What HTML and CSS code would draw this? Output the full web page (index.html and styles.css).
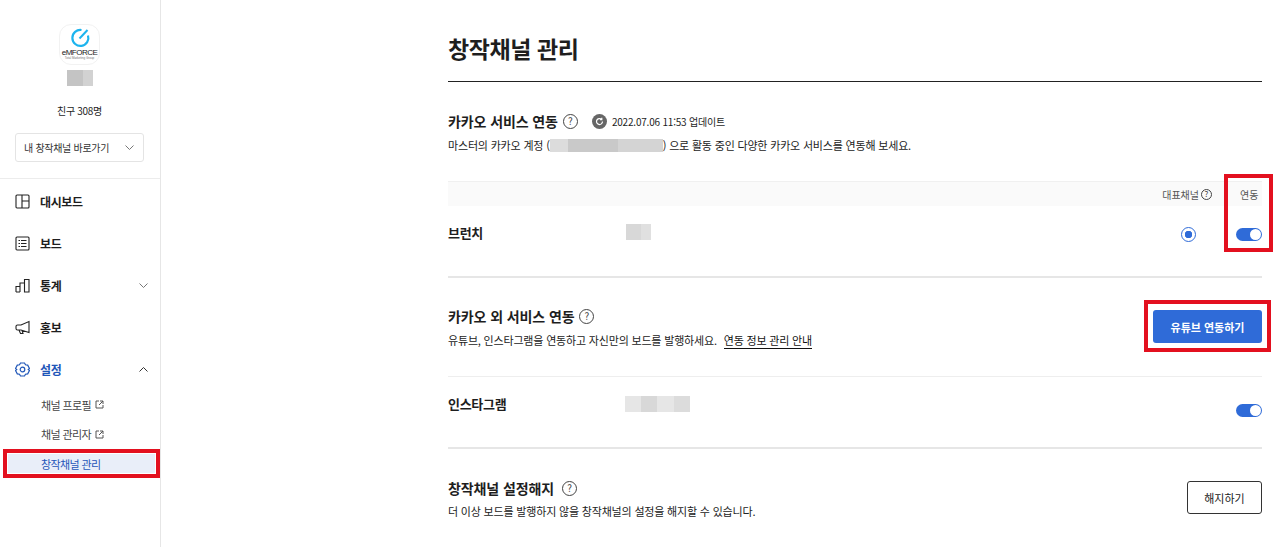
FILE: index.html
```html
<!DOCTYPE html>
<html lang="ko">

<head>
    <meta charset="UTF-8">
    <meta name="viewport" content="width=device-width, initial-scale=1.0">
    <title>창작채널 관리</title>
    <link rel="stylesheet" href="styles.css">
</head>

<body>
    <div class="page">
        <aside class="side">
            <div class="profile">
                <div class="logo">
                    <svg width="26" height="22" viewBox="0 0 26 22">
                        <path d="M14.500 3a8 8 0 1 0 6.500 5.500" fill="none" stroke="#1db4ee" stroke-width="2.200" />
                        <path d="M12.500 11.500 20.500 3" fill="none" stroke="#1db4ee" stroke-width="2" />
                    </svg>
                    <span class="logo_name">eMFORCE</span>
                    <span class="logo_sub">Total Marketing Group</span>
                </div>
                <div class="blur blur_name"></div>
                <p class="friends">친구 308명</p>
                <div class="select">
                    <span>내 창작채널 바로가기</span>
                    <svg width="9" height="5" viewBox="0 0 9 5"><path d="M.5.5l4 4 4-4" fill="none" stroke="#777" /></svg>
                </div>
            </div>

            <nav class="nav">
                <a class="nav_item">
                    <svg width="15" height="15" viewBox="0 0 15 15" fill="none" stroke="#222" stroke-width="1.100"><rect x="1" y="1" width="13" height="13" rx="1" /><path d="M7 1v13M7 7h7" /></svg>
                    <span>대시보드</span>
                </a>
                <a class="nav_item">
                    <svg width="15" height="15" viewBox="0 0 15 15" fill="none" stroke="#222" stroke-width="1.100"><rect x="1" y="1" width="13" height="13" rx="1" /><path d="M3.500 4.500h1.500M6 4.500h5.500M3.500 7.500h1.500M6 7.500h5.500M3.500 10.500h1.500M6 10.500h5.500" /></svg>
                    <span>보드</span>
                </a>
                <a class="nav_item">
                    <svg width="15" height="15" viewBox="0 0 15 15" fill="none" stroke="#222" stroke-width="1.100"><path d="M1 14V8.500h4V14M5 14V5h4.500v9M9.500 14V1.500H14V14zM1 14h4" /></svg>
                    <span>통계</span>
                    <svg class="arrow" width="9" height="5" viewBox="0 0 9 5"><path d="M.5.5l4 4 4-4" fill="none" stroke="#777" /></svg>
                </a>
                <a class="nav_item">
                    <svg width="15" height="15" viewBox="0 0 15 15" fill="none" stroke="#222" stroke-width="1.100"><path d="M14 1.500v11L6 10H2.500a1.500 1.500 0 0 1-1.500-1.500v-2A1.500 1.500 0 0 1 2.500 5H6zM4 10l1.500 3.500H8L7 10.300" /></svg>
                    <span>홍보</span>
                </a>
                <a class="nav_item nav_on">
                    <svg width="15" height="15" viewBox="0 0 15 15" fill="none" stroke="#1f56b8" stroke-width="1.200"><path d="M5.500 1h4l1 1.800 2.200.3 1.800 3.400-1.200 1 1.200 1-1.800 3.400-2.200.3-1 1.800h-4l-1-1.800-2.200-.3L.500 8.500l1.200-1-1.200-1 1.800-3.400 2.200-.3z" /><circle cx="7.500" cy="7.500" r="2.300" /></svg>
                    <span>설정</span>
                    <svg class="arrow" width="9" height="5" viewBox="0 0 9 5"><path d="M.5 4.500l4-4 4 4" fill="none" stroke="#333" /></svg>
                </a>
            </nav>

            <div class="sub">
                <a class="sub_item">
                    <span>채널 프로필</span>
                    <svg width="9" height="9" viewBox="0 0 9 9" fill="none" stroke="#555"><path d="M4 1H1v7h7V5M5 1h3v3M8 1L4 5" /></svg>
                </a>
                <a class="sub_item">
                    <span>채널 관리자</span>
                    <svg width="9" height="9" viewBox="0 0 9 9" fill="none" stroke="#555"><path d="M4 1H1v7h7V5M5 1h3v3M8 1L4 5" /></svg>
                </a>
                <a class="sub_item sub_on"><span>창작채널 관리</span></a>
            </div>
        </aside>

        <main class="main">
            <h1 class="title">창작채널 관리</h1>

            <section class="kakao">
                <div class="head">
                    <h2>카카오 서비스 연동</h2>
                    <span class="help">?</span>
                    <span class="refresh">
                        <svg width="9" height="9" viewBox="0 0 9 9" fill="none" stroke="#fff" stroke-width="1.200"><path d="M7.500 4.500a3 3 0 1 1-1-2.200M6.800 .8v1.800H5" /></svg>
                    </span>
                    <span class="update">2022.07.06 11:53 업데이트</span>
                </div>
                <p class="desc">마스터의 카카오 계정 (<span class="blur blur_mail"></span>) 으로 활동 중인 다양한 카카오 서비스를 연동해 보세요.</p>

                <div class="thead">
                    <span class="th_main">대표채널 <span class="help help_small">?</span></span>
                    <span class="th_link">연동</span>
                </div>
                <div class="row row_branch">
                    <strong class="row_name">브런치</strong>
                    <div class="blur blur_branch"></div>
                    <span class="radio"></span>
                    <span class="toggle"></span>
                </div>
            </section>

            <section class="other">
                <div class="split">
                    <div>
                        <div class="head">
                            <h2>카카오 외 서비스 연동</h2>
                            <span class="help">?</span>
                        </div>
                        <p class="desc">유튜브, 인스타그램을 연동하고 자신만의 보드를 발행하세요. <a class="guide">연동 정보 관리 안내</a></p>
                    </div>
                    <button class="btn btn_blue">유튜브 연동하기</button>
                </div>
                <div class="row row_insta">
                    <strong class="row_name row_name_insta">인스타그램</strong>
                    <div class="blur blur_insta"></div>
                    <span class="toggle toggle_low"></span>
                </div>
            </section>

            <section class="quit">
                <div class="split">
                    <div>
                        <div class="head">
                            <h2>창작채널 설정해지</h2>
                            <span class="help">?</span>
                        </div>
                        <p class="desc">더 이상 보드를 발행하지 않을 창작채널의 설정을 해지할 수 있습니다.</p>
                    </div>
                    <button class="btn btn_line">해지하기</button>
                </div>
            </section>
        </main>
    </div>

    <div class="mark mark_side"></div>
    <div class="mark mark_toggle"></div>
    <div class="mark mark_btn"></div>
</body>

</html>
```

FILE: styles.css
```css
* {
    box-sizing: border-box;
}

html, body {
    height: 100%;
    margin: 0;
    overflow: hidden;
}

body {
    background-color: #fff;
    color: #1e1e1e;
    font-family: "Noto Sans CJK KR", "Noto Sans", sans-serif;
    font-size: 11px;
    position: relative;
}

h1, h2, p {
    margin: 0;
}

.page {
    display: flex;
    height: 547px;
}

/* left side */
.side {
    width: 161px;
    flex-shrink: 0;
    border-right: 1px solid #e6e6e6;
}

.profile {
    height: 179px;
    padding: 24px 1px 0 0;
    border-bottom: 1px solid #ececec;
    display: flex;
    flex-direction: column;
    align-items: center;
}

.logo {
    width: 41px;
    height: 41px;
    border: 1px solid #f2f2f2;
    border-radius: 12px;
    display: flex;
    flex-direction: column;
    align-items: center;
    overflow: hidden;
    padding-top: 2px;
}

.logo_name {
    font-family: "Liberation Sans", sans-serif;
    font-size: 8px;
    line-height: 8px;
    letter-spacing: -0.5px;
    white-space: nowrap;
    color: #222;
}

.logo_sub {
    font-family: "Liberation Sans", sans-serif;
    font-size: 3px;
    line-height: 3px;
    white-space: nowrap;
    color: #777;
}

.blur {
    background-color: #d6d6d6;
}

.blur_name {
    width: 26px;
    height: 16px;
    margin-top: 5px;
    background: linear-gradient(90deg, #c4c4c4 60%, #d2d2d2 60%);
}

.friends {
    margin-top: 17px;
    line-height: 16px;
    height: 16px;
    font-size: 10px;
    letter-spacing: -0.3px;
}

.select {
    width: 129px;
    height: 29px;
    margin-top: 14px;
    border: 1px solid #e4e4e4;
    border-radius: 3px;
    padding: 0 9px 0 8px;
    display: flex;
    align-items: center;
    justify-content: space-between;
    font-size: 10px;
    letter-spacing: -0.3px;
    color: #333;
}

.nav {
    padding-top: 1px;
}

.nav_item {
    height: 42px;
    padding: 0 12px 0 15px;
    display: flex;
    align-items: center;
    gap: 10px;
    font-size: 12px;
    font-weight: 700;
    letter-spacing: -0.4px;
}

.arrow {
    margin-left: auto;
}

.nav_on {
    color: #1f56b8;
}

.sub_item {
    height: 29.500px;
    padding-left: 41px;
    display: flex;
    align-items: center;
    gap: 4px;
    font-size: 11px;
    letter-spacing: -0.6px;
    color: #444;
}

.sub_on {
    color: #1f56b8;
}

/* main area */
.main {
    width: 814px;
    margin-left: 287px;
}

.title {
    height: 82px;
    padding-top: 30px;
    border-bottom: 1px solid #222;
    font-size: 23px;
    line-height: 36px;
    font-weight: 700;
    letter-spacing: -0.4px;
}

.head {
    height: 20px;
    display: flex;
    align-items: center;
}

.head h2 {
    font-size: 14px;
    line-height: 20px;
    font-weight: 700;
    letter-spacing: -0.1px;
}

.help {
    width: 15px;
    height: 15px;
    margin-left: 5px;
    border: 1px solid #444;
    border-radius: 50%;
    display: inline-flex;
    align-items: center;
    justify-content: center;
    font-size: 10px;
    line-height: 1;
    color: #444;
}

.help_small {
    width: 11px;
    height: 11px;
    margin-left: 0;
    font-size: 8px;
}

.refresh {
    width: 15px;
    height: 15px;
    margin-left: 14px;
    border-radius: 50%;
    background-color: #666;
    display: inline-flex;
    align-items: center;
    justify-content: center;
}

.update {
    margin-left: 5px;
    font-size: 10px;
    letter-spacing: -0.2px;
}

.desc {
    margin-top: 5px;
    font-size: 11px;
    line-height: 18px;
    letter-spacing: -0.18px;
    color: #222;
}

.guide {
    margin-left: 4px;
    border-bottom: 1px solid #111;
    color: #111;
}

.blur_mail {
    display: inline-block;
    width: 113px;
    height: 13px;
    vertical-align: -2px;
    background: linear-gradient(90deg, #dcdcdc 0 16%, #c9c9c9 16% 60%, #d4d4d4 60% 100%);
}

.kakao {
    padding-top: 29px;
    height: 196px;
    border-bottom: 2px solid #e6e6e6;
}

.thead {
    height: 25px;
    margin-top: 27px;
    border-top: 1px solid #f0f0f0;
    background-color: #fafafa;
    display: flex;
    align-items: center;
    justify-content: flex-end;
    font-size: 10px;
    color: #555;
}

.th_main {
    display: inline-flex;
    align-items: center;
    gap: 2px;
}

.th_link {
    width: 22px;
    margin-left: 28px;
}

.row {
    display: flex;
    align-items: center;
}

.row_name {
    width: 178px;
    font-size: 13px;
    font-weight: 700;
    letter-spacing: -0.3px;
}

.row_name_insta {
    width: 177px;
}

.row_branch {
    height: 53px;
}

.blur_branch {
    width: 25px;
    height: 16px;
    margin-top: -1px;
    background: linear-gradient(90deg, #d8d8d8 60%, #e0e0e0 60%);
}

.radio {
    width: 15px;
    height: 15px;
    margin-left: auto;
    margin-right: 40px;
    margin-top: 3px;
    border: 1px solid #2f6bd8;
    border-radius: 50%;
    background: radial-gradient(circle, #2f6bd8 0 3.500px, #fff 4px);
}

.toggle {
    width: 26px;
    height: 13px;
    margin-top: 3px;
    border-radius: 7px;
    background-color: #2f6bd8;
    position: relative;
}

.toggle::after {
    content: "";
    position: absolute;
    top: 1px;
    right: 1px;
    width: 11px;
    height: 11px;
    border-radius: 50%;
    background-color: #fff;
}

.toggle_low {
    margin-left: auto;
    margin-top: 14px;
}

.other {
    height: 171px;
    padding-top: 28px;
    border-bottom: 2px solid #e6e6e6;
}

.split {
    display: flex;
    justify-content: space-between;
    align-items: flex-start;
}

.other .split {
    height: 71px;
    border-bottom: 1px solid #eee;
}

.btn {
    font-family: inherit;
    font-size: 11px;
    border-radius: 3px;
    height: 33px;
    padding: 0;
}

.btn_blue {
    width: 109px;
    margin-top: 4px;
    border: 0;
    background-color: #2f6bd8;
    color: #fff;
    font-weight: 700;
}

.btn_line {
    width: 75px;
    margin-top: 3px;
    border: 1px solid #333;
    background-color: #fff;
    color: #222;
}

.row_insta {
    height: 53px;
}

.blur_insta {
    width: 65px;
    height: 16px;
    background: linear-gradient(90deg, #e6e6e6 0 25%, #d8d8d8 25% 50%, #e6e6e6 50% 75%, #dcdcdc 75%);
}

.quit {
    padding-top: 29px;
}

.quit .help {
    margin-left: 8px;
}

.quit .desc {
    margin-top: 4px;
}

/* red boxes drawn over the capture */
.mark {
    position: absolute;
    border: 4px solid #e3101f;
    pointer-events: none;
}

.mark_side {
    left: 3px;
    top: 449px;
    width: 157px;
    height: 29px;
    background-color: rgba(40, 90, 200, .1);
    box-shadow: inset 0 0 0 1px #fff;
}

.mark_toggle {
    left: 1224px;
    top: 174px;
    width: 49px;
    height: 78px;
}

.mark_btn {
    left: 1144px;
    top: 300px;
    width: 127px;
    height: 52px;
}
```
